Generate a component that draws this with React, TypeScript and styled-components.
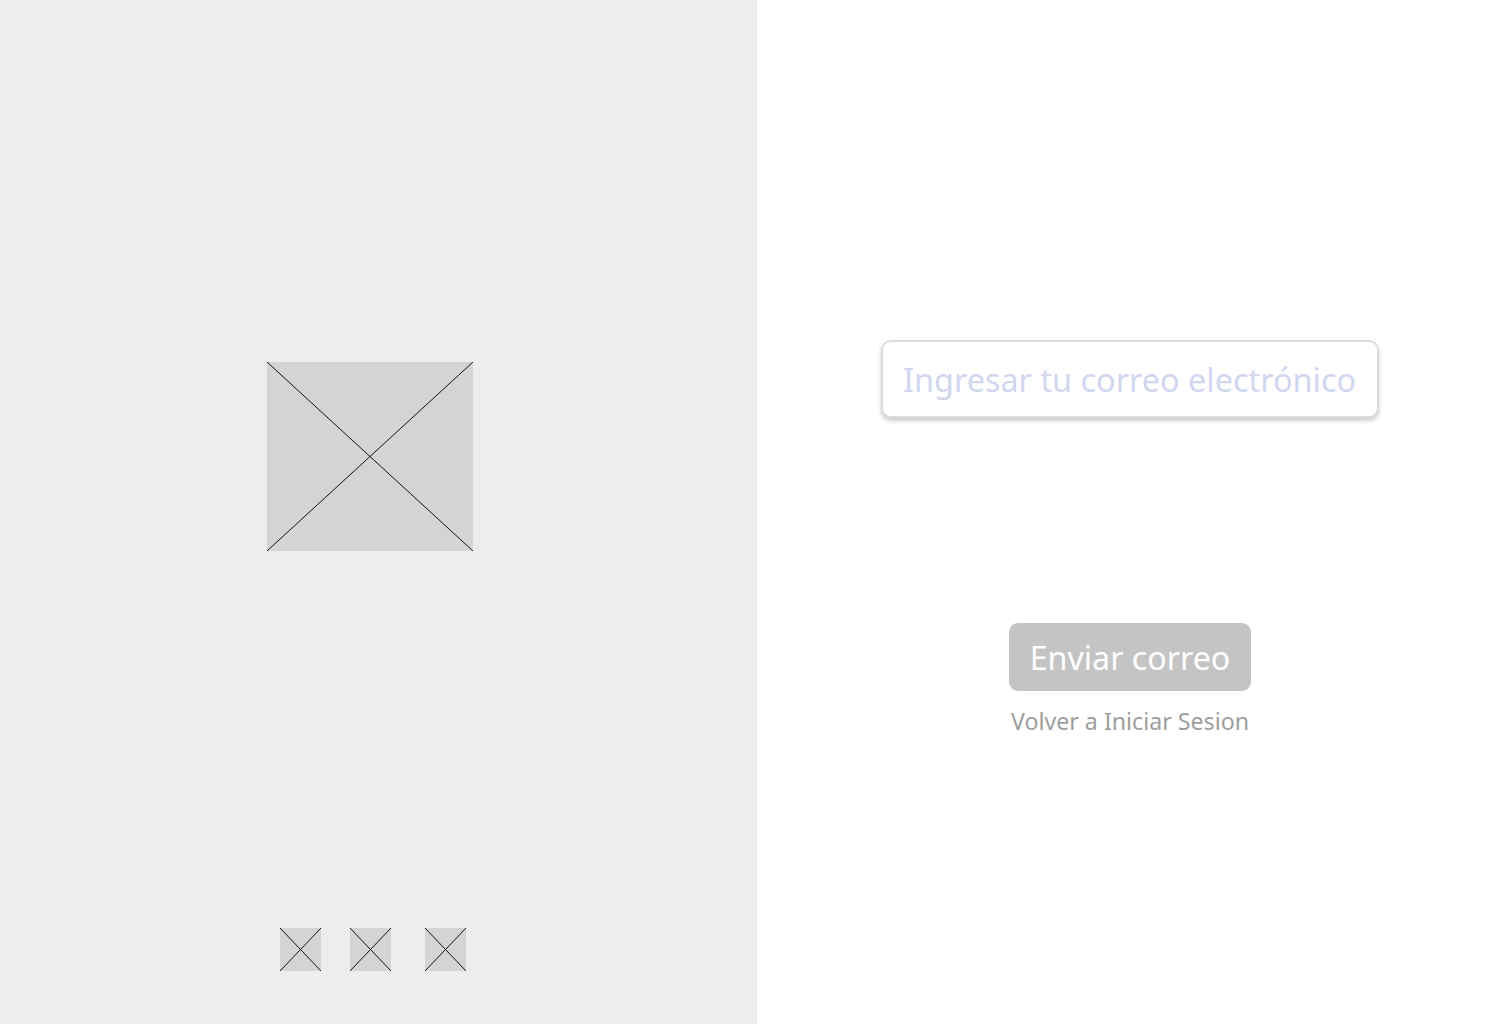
import React from "react";
import styled, { createGlobalStyle } from "styled-components";

const Global = createGlobalStyle`
  html, body { margin: 0; padding: 0; }
  body { font-family: "Noto Sans", "Open Sans", sans-serif; background: #ffffff; }
  * { box-sizing: border-box; }
`;

const Page = styled.div`
  display: grid;
  grid-template-columns: 757px 1fr;
  width: 1512px;
  height: 1024px;
  overflow: hidden;
`;

const LeftPanel = styled.section`
  background: #ededed;
  display: flex;
  flex-direction: column;
  padding: 362px 0 53px 0;
`;

const Placeholder = styled.div<{ $w: number; $h: number }>`
  width: ${(p) => p.$w}px;
  height: ${(p) => p.$h}px;
  flex: none;
  background: #d4d4d4;
  svg { display: block; width: 100%; height: 100%; }
`;

const HeroWrap = styled.div`
  padding-left: 267px;
`;

const Thumbs = styled.div`
  margin-top: auto;
  display: flex;
  padding-left: 280px;
`;

const ThumbSlot = styled.div<{ $gap: number }>`
  margin-left: ${(p) => p.$gap}px;
`;

const RightPanel = styled.section`
  background: #ffffff;
  padding: 340px 0 0 124px;
`;

const Form = styled.div`
  width: 498px;
  display: flex;
  flex-direction: column;
  align-items: center;
`;

const EmailInput = styled.input`
  width: 498px;
  height: 78px;
  border: 2px solid #dcdcdc;
  border-radius: 10px;
  box-shadow: 0 3px 4px rgba(0, 0, 0, 0.2);
  padding: 0 20px;
  font-family: inherit;
  font-size: 32.4px;
  color: #555;
  outline: none;
  &::placeholder { color: #d3d6ef; }
`;

const SendButton = styled.button`
  margin-top: 205px;
  width: 242px;
  height: 68px;
  border: none;
  border-radius: 9px;
  background: #c4c4c4;
  color: #ffffff;
  font-family: inherit;
  font-size: 32.2px;
  cursor: pointer;
  padding: 0;
`;

const BackLink = styled.a`
  margin-top: 15px;
  font-size: 23.2px;
  color: #9e9e9e;
  text-decoration: none;
  line-height: 30px;
`;

const Cross = () => (
  <svg viewBox="0 0 100 100" preserveAspectRatio="none">
    <line x1="0" y1="0" x2="100" y2="100" stroke="#111" strokeWidth="1" vectorEffect="non-scaling-stroke" />
    <line x1="100" y1="0" x2="0" y2="100" stroke="#111" strokeWidth="1" vectorEffect="non-scaling-stroke" />
  </svg>
);

export default function App() {
  return (
    <>
      <Global />
      <Page>
        <LeftPanel>
          <HeroWrap>
            <Placeholder $w={206} $h={189}>
              <Cross />
            </Placeholder>
          </HeroWrap>
          <Thumbs>
            {[0, 29, 34].map((g, i) => (
              <ThumbSlot key={i} $gap={g}>
                <Placeholder $w={41} $h={43}>
                  <Cross />
                </Placeholder>
              </ThumbSlot>
            ))}
          </Thumbs>
        </LeftPanel>
        <RightPanel>
          <Form>
            <EmailInput type="email" placeholder="Ingresar tu correo electrónico" />
            <SendButton>Enviar correo</SendButton>
            <BackLink href="#">Volver a Iniciar Sesion</BackLink>
          </Form>
        </RightPanel>
      </Page>
    </>
  );
}
